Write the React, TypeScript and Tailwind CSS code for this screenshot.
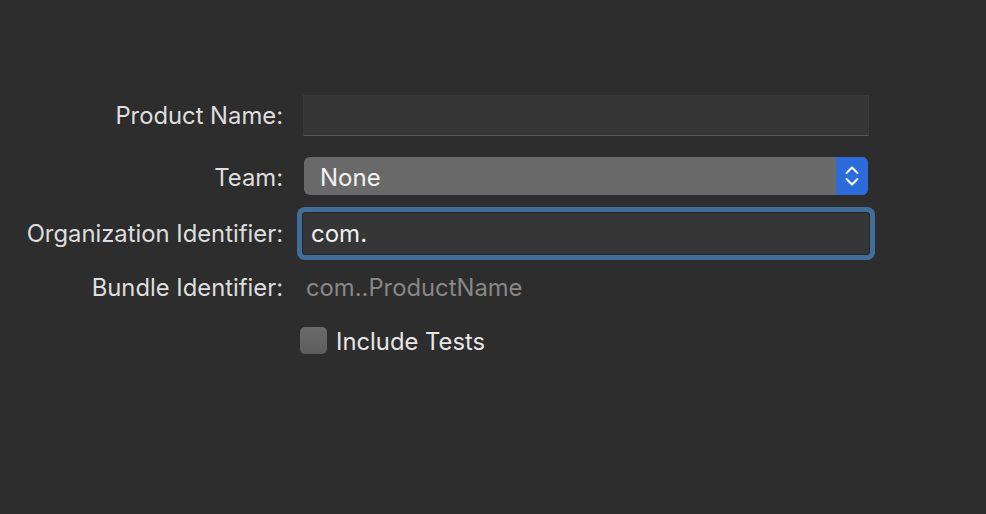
import React from 'react';

const font = { fontFamily: 'Inter, "Noto Sans", sans-serif' };

function Label({ children, className = '' }: { children: React.ReactNode; className?: string }) {
  return (
    <div className={`w-[283px] shrink-0 text-right text-[23.8px] text-[#dedede] ${className}`}>{children}</div>
  );
}

export default function App() {
  return (
    <div className="h-[514px] w-[986px] overflow-hidden bg-[#2d2d2d] pt-[95px]" style={font}>
      {/* Product Name */}
      <div className="flex h-[41px] items-center">
        <Label>Product Name:</Label>
        <div className="ml-[20px] h-[41px] w-[566px] border border-[#3b3b3b] border-b-[#575757] bg-[#363636]" />
      </div>

      {/* Team */}
      <div className="mt-[21px] flex h-[38px] items-center">
        <Label className="pt-[3px]">Team:</Label>
        <div className="ml-[21px] flex h-[38px] w-[564px] items-center overflow-hidden rounded-[6px] bg-[#696969]">
          <span className="flex-1 pl-[16px] pt-[3px] text-[24px] text-[#f2f2f2]">None</span>
          <div className="flex h-full w-[32px] items-center justify-center bg-[#2c6bdc]">
            <svg width="16" height="28" viewBox="0 0 16 28" fill="none">
              <path d="M2.5 11 L8 5.5 L13.5 11" stroke="#ffffff" strokeWidth="2" strokeLinecap="round" strokeLinejoin="round" />
              <path d="M2.5 17 L8 22.5 L13.5 17" stroke="#ffffff" strokeWidth="2" strokeLinecap="round" strokeLinejoin="round" />
            </svg>
          </div>
        </div>
      </div>

      {/* Organization Identifier */}
      <div className="mt-[17px] flex h-[43px] items-center">
        <Label>Organization Identifier:</Label>
        <div className="ml-[19px] flex h-[43px] w-[568px] items-center rounded-[3px] border border-[#262626] bg-[#363636] pl-[8px] shadow-[0_0_0_5px_#416d9b] text-[24px] text-[#f0f0f0]">
          com.
        </div>
      </div>

      {/* Bundle Identifier */}
      <div className="mt-[21px] flex h-[24px] items-center">
        <Label>Bundle Identifier:</Label>
        <span className="ml-[23px] text-[23.8px] text-[#878787]">com..ProductName</span>
      </div>

      {/* Include Tests */}
      <div className="mt-[27px] flex h-[27px] items-center">
        <div className="w-[283px] shrink-0" />
        <div className="ml-[17px] h-[27px] w-[27px] rounded-[5px] bg-gradient-to-b from-[#6b6b6b] to-[#5c5c5c]" />
        <span className="ml-[9px] pt-[2px] text-[23.8px] text-[#e6e6e6]">Include Tests</span>
      </div>
    </div>
  );
}
